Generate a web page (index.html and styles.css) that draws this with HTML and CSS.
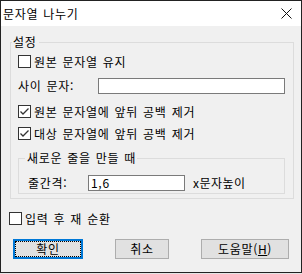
FILE: index.html
```html
<!DOCTYPE html>
<html lang="ko">
<head>
<meta charset="utf-8">
<link rel="stylesheet" href="styles.css">
</head>
<body>
<div class="win">
  <div class="titlebar">
    <span class="title">문자열 나누기</span>
    <svg class="close" width="11" height="11" viewBox="0 0 11 11"><path d="M0.5 0.5 L10.5 10.5 M10.5 0.5 L0.5 10.5" stroke="#111" stroke-width="1" fill="none"/></svg>
  </div>
  <div class="client">
    <div class="group outer">
      <span class="legend outer-legend">설정</span>
      <div class="check c1"><span class="box"></span><span>원본 문자열 유지</span></div>
      <div class="field f1"><span class="flabel">사이 문자:</span><span class="input wide"></span></div>
      <div class="check c2"><span class="box"><svg width="11" height="11" viewBox="0 0 11 11"><path d="M1.5 5.5 L4 8 L9.5 2.5" stroke="#333" stroke-width="1.3" fill="none"/></svg></span><span>원본 문자열에 앞뒤 공백 제거</span></div>
      <div class="check c3"><span class="box"><svg width="11" height="11" viewBox="0 0 11 11"><path d="M1.5 5.5 L4 8 L9.5 2.5" stroke="#333" stroke-width="1.3" fill="none"/></svg></span><span>대상 문자열에 앞뒤 공백 제거</span></div>
      <div class="group inner">
        <span class="legend inner-legend">새로운 줄을 만들 때</span>
        <div class="field f2"><span class="flabel short">줄간격:</span><span class="input small">1,6</span><span class="unit">x문자높이</span></div>
      </div>
    </div>
    <div class="check c4"><span class="box"></span><span>입력 후 재 순환</span></div>
    <div class="buttons">
      <button class="btn ok default">확인</button>
      <button class="btn cancel">취소</button>
      <button class="btn help">도움말(<u>H</u>)</button>
    </div>
  </div>
</div>
</body>
</html>
```

FILE: styles.css
```css
* { box-sizing: border-box; margin: 0; padding: 0; }
html, body { width: 302px; height: 274px; }
body {
  background: #e6e6e6;
  font-family: "Noto Sans CJK KR", "Noto Sans", sans-serif;
  font-size: 12px;
  line-height: 12px;
  letter-spacing: 0.7px;
  word-spacing: 1px;
  color: #000;
  overflow: hidden;
}
.win {
  width: 302px;
  height: 273px;
  border: 1px solid #222;
  background: #f0f0f0;
  display: flex;
  flex-direction: column;
}
.titlebar {
  height: 25px;
  flex: none;
  background: #fff;
  display: flex;
  align-items: center;
  justify-content: space-between;
  padding: 0 9px 0 2px;
}
.title { line-height: 12px; }
.close { display: block; }
.client {
  flex: 1;
  display: flex;
  flex-direction: column;
  align-items: flex-start;
}
.group {
  border: 1px solid #dcdcdc;
  display: flex;
  flex-direction: column;
  align-items: flex-start;
}
.outer {
  margin: 16px 0 0 9px;
  width: 284px;
  padding: 0 8px 4px 7px;
}
.legend {
  height: 12px;
  margin-top: -7px;
  background: #f0f0f0;
}
.outer-legend { margin-left: -6px; padding: 0 3px 0 1px; }
.inner-legend { margin-left: -3px; padding: 0 1px 0 2px; }
.check {
  display: flex;
  align-items: center;
  gap: 3px;
  height: 13px;
}
.box {
  width: 13px;
  height: 13px;
  border: 1px solid #333;
  background: #fff;
  display: flex;
  align-items: center;
  justify-content: center;
}
.box svg { display: block; }
.c1 { margin-top: 7px; }
.c2 { margin-top: 11px; }
.c3 { margin-top: 9px; }
.c4 { margin: 13px 0 0 8px; }
.field {
  display: flex;
  align-items: center;
}
.f1 { margin-top: 10px; }
.flabel { width: 80px; }
.flabel.short { width: 60px; }
.input {
  height: 16px;
  border: 1px solid #7a7a7a;
  background: #fff;
  padding-left: 2px;
  display: flex;
  align-items: center;
}
.wide { width: 187px; }
.small { width: 97px; }
.unit { margin-left: 8px; letter-spacing: 0.5px; }
.inner {
  margin-top: 18px;
  align-self: stretch;
  padding: 0 0 2px 9px;
}
.f2 { margin-top: 11px; }
.buttons {
  display: flex;
  gap: 32px;
  margin: 14px 0 0 12px;
}
.btn {
  position: relative;
  height: 20px;
  background: #e1e1e1;
  border: 1px solid #adadad;
  font-family: inherit;
  font-size: 12px;
  line-height: 12px;
  letter-spacing: 0.7px;
  color: #000;
  display: flex;
  align-items: center;
  justify-content: center;
}
.btn u { text-decoration: underline; text-underline-offset: 1px; }
.ok { width: 70px; }
.cancel { width: 54px; }
.help { width: 88px; }
.default { border: 2px solid #0078d7; }
.default::after {
  content: "";
  position: absolute;
  inset: 0;
  border: 1px dotted #000;
}
```
